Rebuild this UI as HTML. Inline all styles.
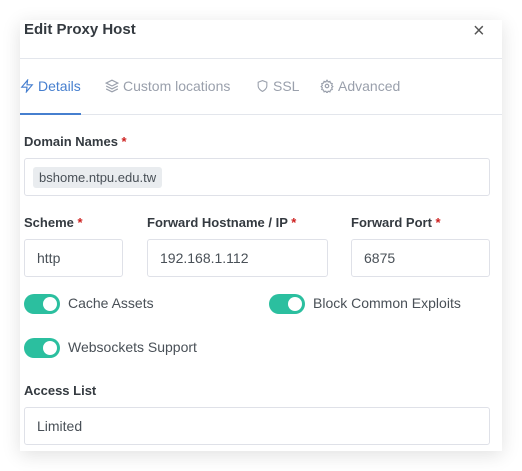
<!DOCTYPE html>
<html><head><meta charset="utf-8"><style>
*{box-sizing:border-box;margin:0;padding:0}
body{width:522px;height:471px;background:#fff;font-family:"Liberation Sans",sans-serif;position:relative;overflow:hidden;color:#495057}
.card{position:absolute;left:20px;top:20px;width:482px;height:431px;background:#fff;box-shadow:0 4px 18px rgba(0,0,0,0.12)}
.a{position:absolute}
.lbl{font-weight:bold;font-size:13px;color:#343a40}
.lbl i{color:#cd201f;font-style:normal}
.inp{position:absolute;border:1px solid #dfe1e8;border-radius:3px;font-size:14px;color:#495057;padding-left:12px;display:flex;align-items:center}
.tog{position:absolute;width:36px;height:20px;border-radius:10px;background:#2bbf9f}
.tog:after{content:"";position:absolute;right:3px;top:3px;width:14px;height:14px;border-radius:50%;background:#fff}
.tl{position:absolute;font-size:14px;color:#495057}
.tab{position:absolute;top:78px;font-size:14px;color:#9aa0ac;display:flex;align-items:center;gap:4px}
</style></head><body>
<div class="card">
<div class="a" style="left:4px;top:1px;font-size:15px;font-weight:bold;color:#343a40">Edit Proxy Host</div>
<div class="a" style="left:453px;top:0px;font-size:20px;color:#555">×</div>
<div class="a" style="left:0;top:38px;width:482px;height:1px;background:#e3e6ec"></div>
<div class="a" style="left:0;top:94px;width:482px;height:1px;background:#e3e6ec"></div>
<div class="a" style="left:0;top:93px;width:61px;height:2px;background:#467fcf"></div>
</div>
<div class="tab" style="left:20px;color:#467fcf"><svg width="14" height="14" viewBox="0 0 24 24" fill="none" stroke="#467fcf" stroke-width="2"><path d="M13 2L3 14h9l-1 8 10-12h-9l1-8z"/></svg>Details</div>
<div class="tab" style="left:105px"><svg width="14" height="14" viewBox="0 0 24 24" fill="none" stroke="#9aa0ac" stroke-width="2"><path d="M12 2L2 7l10 5 10-5-10-5zM2 17l10 5 10-5M2 12l10 5 10-5"/></svg>Custom locations</div>
<div class="tab" style="left:256px"><svg width="13" height="14" viewBox="0 0 24 24" fill="none" stroke="#9aa0ac" stroke-width="2"><path d="M12 22s8-4 8-10V5l-8-3-8 3v7c0 6 8 10 8 10z"/></svg>SSL</div>
<div class="tab" style="left:320px"><svg width="14" height="14" viewBox="0 0 24 24" fill="none" stroke="#9aa0ac" stroke-width="2"><circle cx="12" cy="12" r="3"/><path d="M12 2l2 3 3-1 1 3 3 1-1 3 2 2-2 2 1 3-3 1-1 3-3-1-2 3-2-3-3 1-1-3-3-1 1-3-2-2 2-2-1-3 3-1 1-3 3 1z"/></svg>Advanced</div>

<div class="a lbl" style="left:24px;top:134px">Domain Names <i>*</i></div>
<div class="inp" style="left:24px;top:158px;width:466px;height:38px;padding-left:8px"><span style="background:#e9ecef;border-radius:3px;padding:2px 6px;font-size:13px;line-height:17px">bshome.ntpu.edu.tw</span></div>

<div class="a lbl" style="left:24px;top:215px">Scheme <i>*</i></div>
<div class="a lbl" style="left:147px;top:215px">Forward Hostname / IP <i>*</i></div>
<div class="a lbl" style="left:351px;top:215px">Forward Port <i>*</i></div>
<div class="inp" style="left:24px;top:239px;width:99px;height:38px">http</div>
<div class="inp" style="left:147px;top:239px;width:181px;height:38px">192.168.1.112</div>
<div class="inp" style="left:351px;top:239px;width:139px;height:38px">6875</div>

<div class="tog" style="left:24px;top:294px"></div><div class="tl" style="left:68px;top:295px">Cache Assets</div>
<div class="tog" style="left:269px;top:294px"></div><div class="tl" style="left:313px;top:295px">Block Common Exploits</div>
<div class="tog" style="left:24px;top:338px"></div><div class="tl" style="left:68px;top:339px">Websockets Support</div>

<div class="a lbl" style="left:24px;top:383px">Access List</div>
<div class="inp" style="left:24px;top:407px;width:466px;height:38px">Limited</div>
</body></html>
